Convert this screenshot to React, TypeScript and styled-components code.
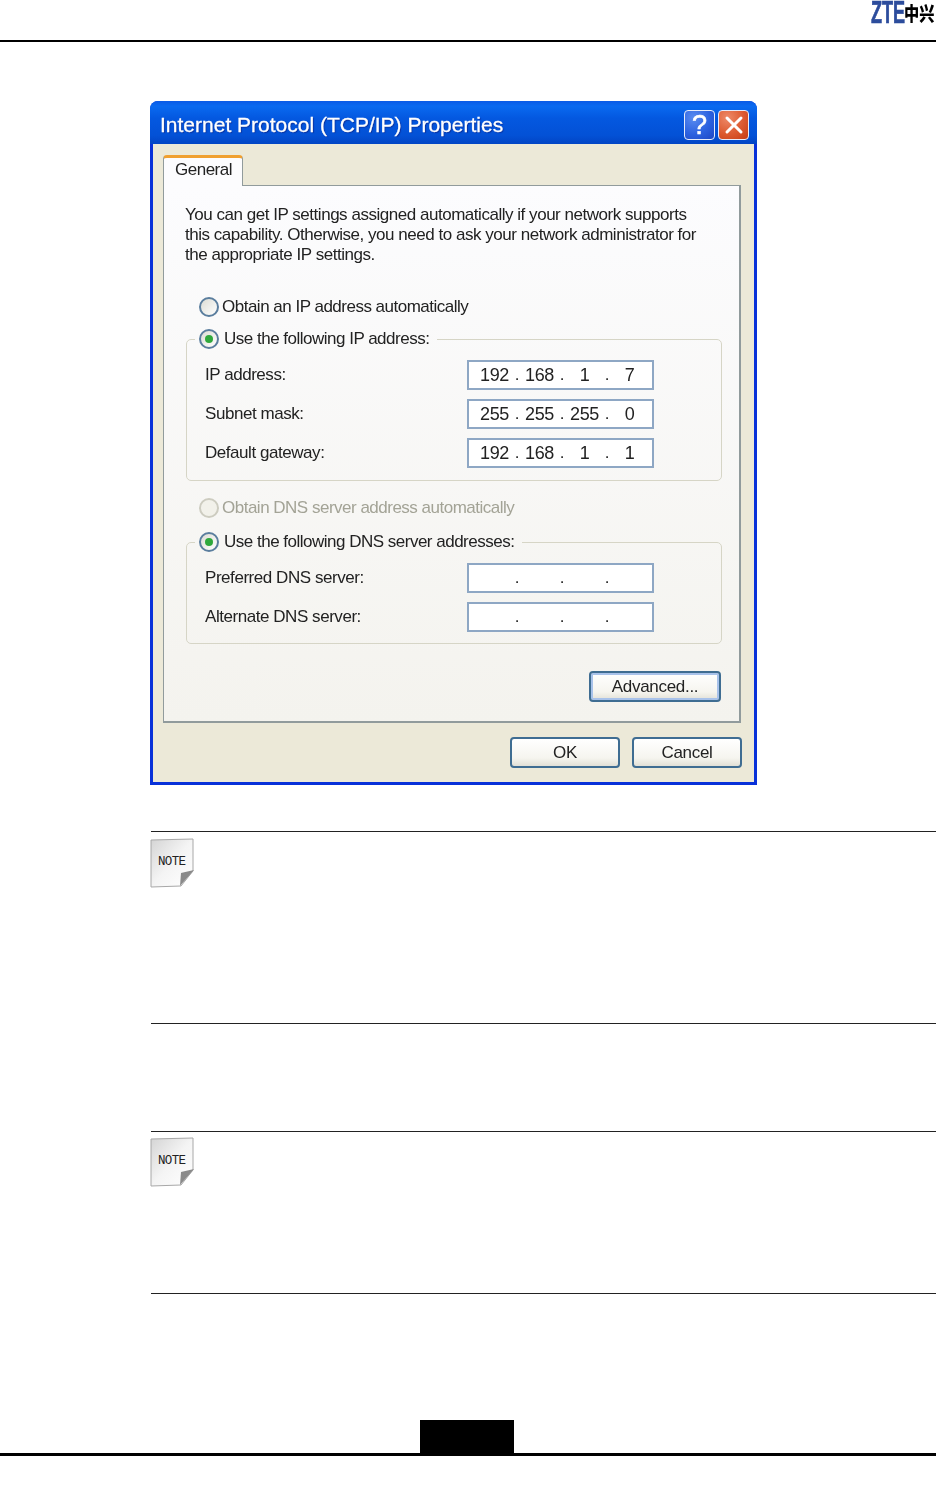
import { Fragment } from "react";
import styled, { createGlobalStyle } from "styled-components";

const GlobalStyle = createGlobalStyle`
  html, body { margin: 0; padding: 0; background: #fff; }
  * { box-sizing: border-box; }
`;

const Page = styled.div`
  width: 936px;
  height: 1504px;
  overflow: hidden;
  background: #fff;
  display: flex;
  flex-direction: column;
  font-family: "Liberation Sans", Arial, sans-serif;
`;

const Header = styled.header`
  height: 42px;
  border-bottom: 2px solid #000;
  display: flex;
  justify-content: flex-end;
`;

const Logo = styled.div`
  display: flex;
  align-items: flex-start;
  height: 26px;
  filter: blur(0.3px);
`;

const LogoLatin = styled.span`
  width: max-content;
  margin: 1px -4.6px 0 0;
  font-size: 20px;
  line-height: 23px;
  font-weight: 700;
  color: #2c4c9c;
  -webkit-text-stroke: 0.45px #2c4c9c;
  white-space: nowrap;
  transform: scale(0.905, 1.55);
  transform-origin: left center;
`;

const LogoCjk = styled.span`
  width: max-content;
  margin-right: -6.5px;
  font-family: "Noto Sans CJK SC", sans-serif;
  font-size: 19px;
  line-height: 25px;
  font-weight: 900;
  color: #000;
  white-space: nowrap;
  transform: scaleX(0.8);
  transform-origin: left center;
`;

const Content = styled.main`
  flex: 1;
  padding: 59px 0 0 150px;
  display: flex;
  flex-direction: column;
`;

const Dialog = styled.section`
  width: 607px;
  height: 684px;
  display: flex;
  flex-direction: column;
  border-radius: 8px 8px 0 0;
  background: #0831d9;
  filter: blur(0.3px);
  overflow: hidden;
`;

const TitleBar = styled.div`
  height: 43px;
  display: flex;
  align-items: center;
  padding: 5px 8px 0 10px;
  background: linear-gradient(180deg, #0a5ae6 0%, #0a6af0 12%, #0458e0 40%, #0351d6 80%, #0245c4 100%);
`;

const Title = styled.h1`
  flex: 1;
  margin: 0;
  font-size: 21px;
  line-height: 24px;
  font-weight: 400;
  color: #fff;
  -webkit-text-stroke: 0.3px #fff;
  text-shadow: 1px 1px 1px #0b2f9a;
`;

const CaptionButton = styled.div<{ $close?: boolean }>`
  width: 31px;
  height: 30px;
  margin-left: ${(p) => (p.$close ? "3px" : "0")};
  border: 1.5px solid #e6ecfa;
  border-radius: 4px;
  display: flex;
  align-items: center;
  justify-content: center;
  color: #fff;
  font-size: 27px;
  line-height: 28px;
  -webkit-text-stroke: 0.6px #fff;
  background: ${(p) =>
    p.$close
      ? "radial-gradient(circle at 30% 25%, #ee8a68 0%, #dc5a30 55%, #c63c14 100%)"
      : "radial-gradient(circle at 30% 25%, #5a8cf0 0%, #2c62e0 55%, #1d47c4 100%)"};
`;

const Body = styled.div`
  flex: 1;
  margin: 0 3px 3px;
  background: #ece9d8;
  padding: 11px 13px 0 10px;
  display: flex;
  flex-direction: column;
`;

const Tab = styled.div`
  position: relative;
  z-index: 1;
  width: 80px;
  height: 31px;
  margin-bottom: -1px;
  border: 1px solid #919b9c;
  border-top: 3px solid #f0a030;
  border-bottom: 0;
  border-radius: 4px 4px 0 0;
  background: #fcfcfe;
  color: #222;
  font-size: 17px;
  line-height: 24px;
  letter-spacing: -0.5px;
  padding-left: 11px;
`;

const Panel = styled.div`
  width: 578px;
  height: 538px;
  border: 1px solid #919b9c;
  border-right-width: 2px;
  border-bottom-width: 2px;
  background: linear-gradient(180deg, #fcfcfe 0%, #f4f3ee 100%);
  padding: 19px 17px 0 22px;
  display: flex;
  flex-direction: column;
`;

const Intro = styled.p`
  margin: 0 0 0 -1px;
  width: 530px;
  font-size: 17px;
  line-height: 20px;
  letter-spacing: -0.47px;
  color: #222;
  white-space: nowrap;
`;

const RadioRow = styled.div<{ $disabled?: boolean; $top?: number }>`
  height: 22px;
  margin: ${(p) => p.$top ?? 0}px 0 0 13px;
  display: flex;
  align-items: center;
  gap: 3px;
  font-size: 17px;
  letter-spacing: -0.5px;
  white-space: nowrap;
  color: ${(p) => (p.$disabled ? "#a3a396" : "#222")};
`;

const Radio = styled.span<{ $checked?: boolean; $disabled?: boolean }>`
  width: 20px;
  height: 20px;
  flex: none;
  border-radius: 50%;
  border: 2px solid ${(p) => (p.$disabled ? "#cdccc0" : "#5b7e9e")};
  background: ${(p) => (p.$disabled ? "#f2f1ea" : "linear-gradient(135deg, #dcdcd4, #fff)")};
  display: flex;
  align-items: center;
  justify-content: center;
  &::after {
    content: "";
    display: ${(p) => (p.$checked ? "block" : "none")};
    width: 8px;
    height: 8px;
    border-radius: 50%;
    background: #2fa83c;
  }
`;

const Group = styled.fieldset<{ $top: number; $bottom: number }>`
  margin: ${(p) => p.$top}px 0 0;
  min-width: 0;
  border: 1.5px solid #d6d5c6;
  border-radius: 5px;
  padding: 10px 0 ${(p) => p.$bottom}px 18px;
`;

const GroupLegend = styled.legend`
  margin-left: -10px;
  padding: 0 8px 0 4px;
  height: 22px;
  display: flex;
  align-items: center;
  gap: 5px;
  font-size: 17px;
  letter-spacing: -0.5px;
  color: #222;
  white-space: nowrap;
`;

const Fields = styled.div`
  display: grid;
  grid-template-columns: 262px 187px;
  row-gap: 9px;
  align-items: center;
`;

const FieldLabel = styled.span`
  font-size: 17px;
  letter-spacing: -0.45px;
  color: #222;
  white-space: nowrap;
`;

const IpBox = styled.div`
  height: 30px;
  border: 2px solid #8ea7c4;
  background: #fff;
  display: flex;
  align-items: center;
  padding-left: 7px;
`;

const Octet = styled.span`
  width: 37px;
  text-align: center;
  font-size: 18px;
  letter-spacing: -0.3px;
  color: #222;
`;

const Dot = styled.span`
  width: 8px;
  text-align: center;
  font-size: 17px;
  color: #222;
`;

const XpButton = styled.button<{ $focused?: boolean; $width: number }>`
  width: ${(p) => p.$width}px;
  height: 31px;
  padding: 0;
  border: 2px solid #3f6d92;
  border-radius: 4px;
  background: linear-gradient(180deg, #fff 0%, #f6f5ef 70%, #e2e0d6 100%);
  box-shadow: ${(p) => (p.$focused ? "inset 0 0 0 2px #a8c2ea" : "none")};
  font-family: inherit;
  font-size: 17px;
  letter-spacing: -0.3px;
  color: #222;
`;

const AdvancedRow = styled.div`
  margin: 27px 1px 0 0;
  display: flex;
  justify-content: flex-end;
`;

const ActionRow = styled.div`
  margin-top: 14px;
  width: 579px;
  display: flex;
  justify-content: flex-end;
  gap: 12px;
`;

const Note = styled.section<{ $height: number; $top: number; $inset: number }>`
  height: ${(p) => p.$height}px;
  margin-top: ${(p) => p.$top}px;
  border-top: 1.5px solid #222;
  border-bottom: 1.5px solid #222;
  padding-top: ${(p) => p.$inset}px;
  margin-left: 1px;
`;

const NoteIconWrap = styled.div`
  width: 45px;
  height: 50px;
  margin-left: -1px;
`;

const Footer = styled.footer`
  height: 51px;
  margin-top: auto;
  display: flex;
  flex-direction: column;
  align-items: center;
  margin-bottom: 33px;
`;

const PageTab = styled.div`
  width: 94px;
  height: 33px;
  background: #000;
  margin-right: 2px;
`;

const FooterRule = styled.div`
  width: 100%;
  height: 3px;
  background: #000;
`;

function NoteIcon() {
  return (
    <NoteIconWrap>
      <svg width="45" height="50" viewBox="0 0 45 50">
        <defs>
          <linearGradient id="paper" x1="0" y1="0" x2="1" y2="1">
            <stop offset="0" stopColor="#d4d4d4" />
            <stop offset="0.5" stopColor="#f4f4f4" />
            <stop offset="1" stopColor="#fff" />
          </linearGradient>
        </defs>
        <path d="M1 2 L43 1 L43 33 L31 48 L1 49 Z" fill="url(#paper)" stroke="#a8a8a8" strokeWidth="1" />
        <path d="M30 48 L44 32 L31 35 Z" fill="#8a8a8a" />
        <text x="8" y="27" fontFamily="Liberation Mono, monospace" fontSize="12.5" fill="#222" textLength="28">NOTE</text>
      </svg>
    </NoteIconWrap>
  );
}

function IpField(props: { octets?: string[] }) {
  const octets = props.octets ?? ["", "", "", ""];
  return (
    <IpBox>
      {octets.map((o, i) => (
        <Fragment key={i}>
          <Octet>{o || "\u00a0"}</Octet>
          {i < 3 && <Dot>.</Dot>}
        </Fragment>
      ))}
    </IpBox>
  );
}

export default function App() {
  return (
    <Page>
      <GlobalStyle />
      <Header>
        <Logo>
          <LogoLatin>ZTE</LogoLatin>
          <LogoCjk>中兴</LogoCjk>
        </Logo>
      </Header>
      <Content>
        <Dialog>
          <TitleBar>
            <Title>Internet Protocol (TCP/IP) Properties</Title>
            <CaptionButton>?</CaptionButton>
            <CaptionButton $close>
              <svg width="20" height="20" viewBox="0 0 20 20">
                <path d="M3 3 L17 17 M17 3 L3 17" stroke="#fff" strokeWidth="3" strokeLinecap="round" />
              </svg>
            </CaptionButton>
          </TitleBar>
          <Body>
            <Tab>General</Tab>
            <Panel>
              <Intro>
                You can get IP settings assigned automatically if your network supports
                <br />
                this capability. Otherwise, you need to ask your network administrator for
                <br />
                the appropriate IP settings.
              </Intro>
              <RadioRow $top={31}>
                <Radio />
                Obtain an IP address automatically
              </RadioRow>
              <Group $top={10} $bottom={12}>
                <GroupLegend>
                  <Radio $checked />
                  Use the following IP address:
                </GroupLegend>
                <Fields>
                  <FieldLabel>IP address:</FieldLabel>
                  <IpField octets={["192", "168", "1", "7"]} />
                  <FieldLabel>Subnet mask:</FieldLabel>
                  <IpField octets={["255", "255", "255", "0"]} />
                  <FieldLabel>Default gateway:</FieldLabel>
                  <IpField octets={["192", "168", "1", "1"]} />
                </Fields>
              </Group>
              <RadioRow $top={16} $disabled>
                <Radio $disabled />
                Obtain DNS server address automatically
              </RadioRow>
              <Group $top={12} $bottom={11}>
                <GroupLegend>
                  <Radio $checked />
                  Use the following DNS server addresses:
                </GroupLegend>
                <Fields>
                  <FieldLabel>Preferred DNS server:</FieldLabel>
                  <IpField />
                  <FieldLabel>Alternate DNS server:</FieldLabel>
                  <IpField />
                </Fields>
              </Group>
              <AdvancedRow>
                <XpButton $focused $width={132}>Advanced...</XpButton>
              </AdvancedRow>
            </Panel>
            <ActionRow>
              <XpButton $width={110}>OK</XpButton>
              <XpButton $width={110}>Cancel</XpButton>
            </ActionRow>
          </Body>
        </Dialog>
        <Note $top={46} $height={193} $inset={6}>
          <NoteIcon />
        </Note>
        <Note $top={107} $height={163} $inset={5}>
          <NoteIcon />
        </Note>
      </Content>
      <Footer>
        <PageTab />
        <FooterRule />
      </Footer>
    </Page>
  );
}
